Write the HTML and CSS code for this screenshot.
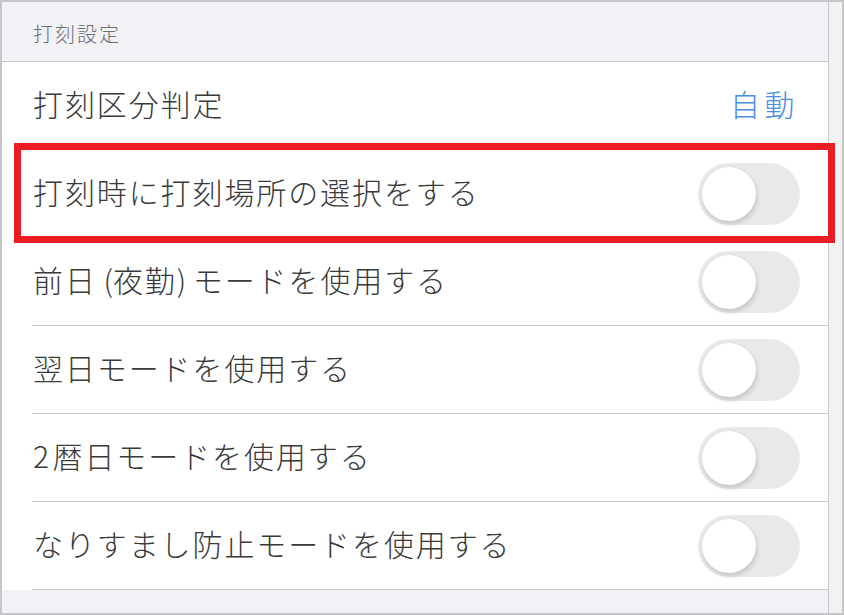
FILE: index.html
```html
<!DOCTYPE html>
<html lang="ja">
<head>
<meta charset="utf-8">
<link rel="stylesheet" href="styles.css">
</head>
<body>
<div class="frame">
  <div class="main">
    <div class="section-header">打刻設定</div>
    <div class="row">
      <span class="label">打刻区分判定</span>
      <span class="value">自動</span>
    </div>
    <div class="row highlighted">
      <span class="label">打刻時に打刻場所の選択をする</span>
      <span class="switch"><span class="knob"></span></span>
      <div class="highlight"></div>
    </div>
    <div class="row">
      <span class="label">前日<span class="latin"> (</span>夜勤<span class="latin">) </span>モードを使用する</span>
      <span class="switch"><span class="knob"></span></span>
    </div>
    <div class="row">
      <span class="label">翌日モードを使用する</span>
      <span class="switch"><span class="knob"></span></span>
    </div>
    <div class="row">
      <span class="label"><span class="digit">2</span>暦日モードを使用する</span>
      <span class="switch"><span class="knob"></span></span>
    </div>
    <div class="row">
      <span class="label">なりすまし防止モードを使用する</span>
      <span class="switch"><span class="knob"></span></span>
    </div>
    <div class="section-footer"></div>
  </div>
  <div class="scrollbar"></div>
</div>
</body>
</html>
```

FILE: styles.css
```css
html, body {
  margin: 0;
  padding: 0;
  background: #ffffff;
}
.frame {
  box-sizing: border-box;
  width: 844px;
  height: 615px;
  border: 2px solid #c6c6c8;
  display: flex;
  overflow: hidden;
  font-family: "Noto Sans CJK JP", "Noto Sans", sans-serif;
  font-weight: 300;
}
.main {
  width: 826px;
  display: flex;
  flex-direction: column;
  background: #ffffff;
}
.scrollbar {
  width: 13px;
  border-left: 1px solid #c8c8cc;
  background: #f2f2f2;
}
.section-header {
  box-sizing: border-box;
  height: 60px;
  background: #f1f1f6;
  border-bottom: 1px solid #c8c7cc;
  display: flex;
  align-items: flex-end;
  padding: 0 0 17px 31px;
  font-size: 20px;
  line-height: 20px;
  letter-spacing: 2px;
  color: #6d6d72;
}
.row {
  position: relative;
  box-sizing: border-box;
  height: 88px;
  display: flex;
  align-items: center;
  justify-content: space-between;
  padding: 0 28px 0 31px;
}
.row::after {
  content: "";
  position: absolute;
  left: 30px;
  right: 0;
  bottom: 0;
  height: 1px;
  background: #c8c7cc;
}
.label {
  font-size: 30px;
  line-height: 34px;
  letter-spacing: 1.9px;
  color: #3a3a3a;
  padding-bottom: 6px;
}
.latin {
  letter-spacing: 0;
}
.digit {
  letter-spacing: 3.5px;
}
.value {
  font-size: 30px;
  line-height: 34px;
  letter-spacing: 4.5px;
  color: #4a8fe0;
  padding-right: 1px;
  padding-bottom: 6px;
}
.switch {
  box-sizing: border-box;
  width: 102px;
  height: 62px;
  border-radius: 31px;
  background: #e9e9eb;
  padding: 4px;
  display: flex;
  align-items: center;
  margin-top: -1px;
}
.knob {
  width: 54px;
  height: 54px;
  border-radius: 50%;
  background: #ffffff;
  box-shadow: 1px 3px 5px rgba(0, 0, 0, 0.16), 0 0 1px rgba(0, 0, 0, 0.08);
}
.highlight {
  position: absolute;
  left: 12px;
  top: -7px;
  width: 821px;
  height: 100px;
  box-sizing: border-box;
  border: 7px solid #ec1c24;
  z-index: 2;
}
.section-footer {
  flex: 1;
  background: #f1f1f6;
}
.row:last-of-type::after {
  left: 0;
}
```
